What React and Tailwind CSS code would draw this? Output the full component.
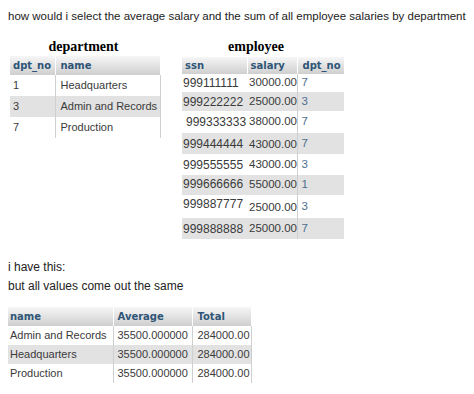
import React from "react";

const department = [
  ["1", "Headquarters"],
  ["3", "Admin and Records"],
  ["7", "Production"],
];

// heights copied from the screenshot, rows aren't perfectly even
const employees = [
  { ssn: "999111111", salary: "30000.00", dpt: "7", h: "h-[18px]" },
  { ssn: "999222222", salary: "25000.00", dpt: "3", h: "h-[19px]" },
  { ssn: "999333333", salary: "38000.00", dpt: "7", h: "h-[22px]", ssnPad: "pl-[4px]" },
  { ssn: "999444444", salary: "43000.00", dpt: "7", h: "h-[21px]", salPad: "pt-[3px]" },
  { ssn: "999555555", salary: "43000.00", dpt: "3", h: "h-[21px]" },
  { ssn: "999666666", salary: "55000.00", dpt: "1", h: "h-[20px]", ssnPad: "pb-[2px]" },
  { ssn: "999887777", salary: "25000.00", dpt: "3", h: "h-[22px]", ssnPad: "pb-[5px]", salPad: "pt-[2px]" },
  { ssn: "999888888", salary: "25000.00", dpt: "7", h: "h-[21px]" },
];

const results = [
  ["Admin and Records", "35500.000000", "284000.00"],
  ["Headquarters", "35500.000000", "284000.00"],
  ["Production", "35500.000000", "284000.00"],
];

const th =
  "bg-gradient-to-b from-[#f6f6f6] to-[#cfcfcf] text-left align-middle font-['DejaVu_Sans',sans-serif] text-[10px] font-bold text-[#2f5577] border-r border-white";

function App() {
  return (
    <div className="w-[474px] h-[394px] bg-white font-['Liberation_Sans',Arial,sans-serif] text-[#3a3a3a] overflow-hidden">
      <p className="pt-[9px] pl-[8px] text-[11.5px] leading-[14px] text-[#222] whitespace-nowrap">
        how would i select the average salary and the sum of all employee salaries by department
      </p>

      <div className="flex items-start mt-[15px]">
        {/* department */}
        <div className="ml-[10px] w-[151px]">
          <div className="text-center font-['Liberation_Serif',serif] font-bold text-[14px] leading-[18px] text-black pr-[4px]">
            department
          </div>
          <table className="table-fixed border-collapse w-[151px] text-[11px]">
            <thead>
              <tr className="h-[19px]">
                <th className={`${th} w-[45px] pl-[3px]`}>dpt_no</th>
                <th className={`${th} pl-[5px]`}>name</th>
              </tr>
            </thead>
            <tbody>
              {department.map(([no, name], i) => (
                <tr key={no} className={`h-[21px] ${i % 2 === 1 ? "bg-[#e2e2e2]" : ""}`}>
                  <td className="pl-[3px] border-r border-[#cfcfcf]">{no}</td>
                  <td className="pl-[5px] border-r border-[#cfcfcf]">{name}</td>
                </tr>
              ))}
            </tbody>
          </table>
        </div>

        {/* employee */}
        <div className="ml-[21px] w-[162px]">
          <div className="text-center font-['Liberation_Serif',serif] font-bold text-[14px] leading-[18px] text-black pr-[14px]">
            employee
          </div>
          <table className="table-fixed border-collapse w-[162px] mt-[1px]">
            <thead>
              <tr className="h-[17px]">
                <th className={`${th} w-[65px] pl-[3px]`}>ssn</th>
                <th className={`${th} w-[50px] pl-[3px]`}>salary</th>
                <th className={`${th} pl-[5px] border-r-0`}>dpt_no</th>
              </tr>
            </thead>
            <tbody>
              {employees.map((e, i) => (
                <tr key={e.ssn} className={`${e.h} ${i % 2 === 1 ? "bg-[#e2e2e2]" : ""}`}>
                  <td className={`text-[12px] pl-[1px] whitespace-nowrap ${e.ssnPad || ""}`}>{e.ssn}</td>
                  <td className={`text-[11.5px] pl-[2px] whitespace-nowrap border-r border-[#cfcfcf] ${e.salPad || ""}`}>{e.salary}</td>
                  <td className="text-[11.5px] pl-[4px] text-[#4d6f8f]">{e.dpt}</td>
                </tr>
              ))}
            </tbody>
          </table>
        </div>
      </div>

      <p className="mt-[21px] pl-[8px] text-[12px] leading-[14px] text-[#222]">i have this:</p>
      <p className="mt-[5px] pl-[8px] text-[12px] leading-[14px] text-[#222]">but all values come out the same</p>

      <table className="table-fixed border-collapse w-[244px] ml-[8px] mt-[12px] text-[11px] border-t-2 border-[#d4d4d4]">
        <thead>
          <tr className="h-[20px]">
            <th className={`${th} w-[105px] pl-[2px] border-t-2 border-t-white`}>name</th>
            <th className={`${th} w-[79px] pl-[4px] border-t-2 border-t-white`}>Average</th>
            <th className={`${th} pl-[5px] border-t-2 border-t-white`}>Total</th>
          </tr>
        </thead>
        <tbody>
          {results.map(([name, avg, total], i) => (
            <tr key={name} className={`h-[19px] ${i % 2 === 1 ? "bg-[#e2e2e2]" : ""}`}>
              <td className="pl-[2px] border-r border-[#cfcfcf]">{name}</td>
              <td className="pl-[4px] border-r border-[#cfcfcf]">{avg}</td>
              <td className="pl-[5px] border-r border-[#cfcfcf]">{total}</td>
            </tr>
          ))}
        </tbody>
      </table>
    </div>
  );
}

export default App;
